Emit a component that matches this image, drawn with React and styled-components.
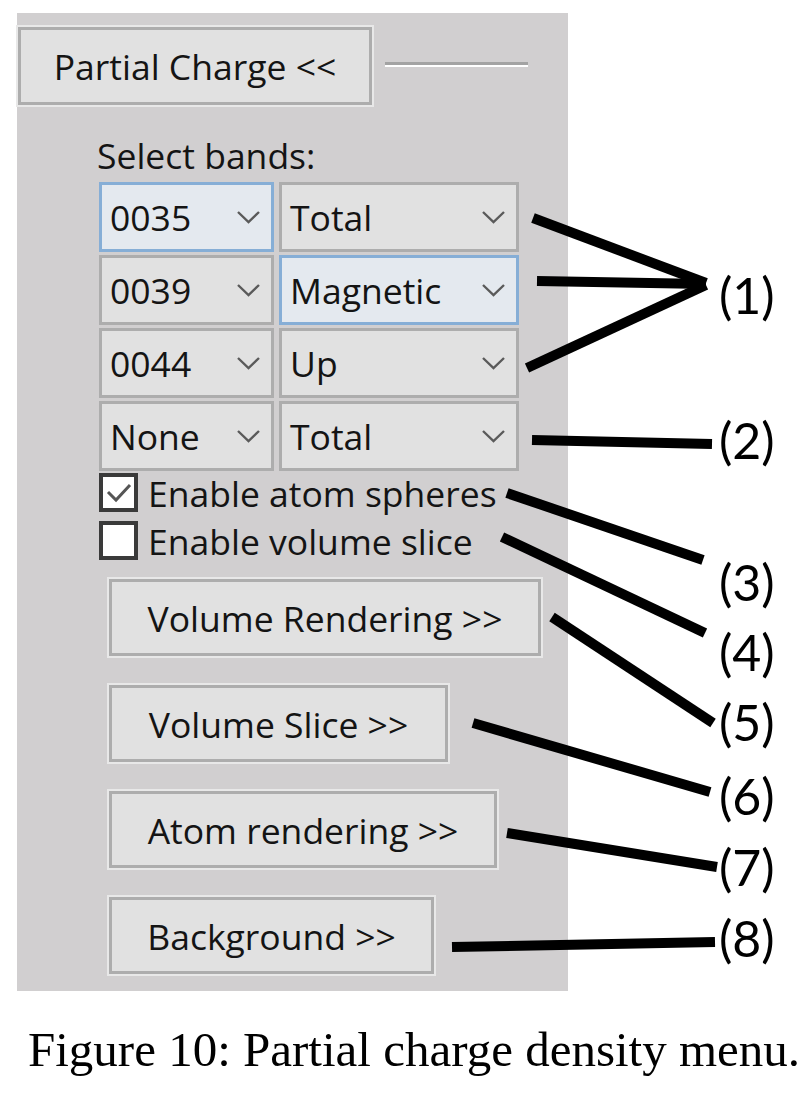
import React from "react";
import styled, { createGlobalStyle } from "styled-components";

const GlobalStyle = createGlobalStyle`
  html, body {
    margin: 0;
    padding: 0;
    background: #ffffff;
  }
  body {
    width: 804px;
    height: 1094px;
    overflow: hidden;
  }
`;

const Page = styled.div`
  width: 804px;
  display: flex;
  flex-direction: column;
`;

const Figure = styled.div`
  position: relative;
  height: 1000px;
  padding: 13px 0 0 17px;
  box-sizing: border-box;
`;

const Panel = styled.div`
  width: 551px;
  height: 978px;
  background: #d1cfd0;
  box-sizing: border-box;
  padding: 14px 0 0 1px;
  display: flex;
  flex-direction: column;
  font-family: "Open Sans", "Noto Sans", sans-serif;
  font-size: 35.5px;
  line-height: 40px;
  color: #141414;
`;

const HeaderRow = styled.div`
  display: flex;
  align-items: center;
  gap: 13px;
`;

const WinButton = styled.button`
  width: ${(p) => p.$width}px;
  height: ${(p) => p.$height || 77}px;
  box-sizing: border-box;
  background: #e1e1e1;
  border: 3px solid #adadad;
  box-shadow: 0 0 0 2px #e8e8e8;
  border-radius: 0;
  padding: 0;
  font: inherit;
  color: inherit;
  text-align: center;
  white-space: nowrap;
  flex: none;
`;

const GroupLine = styled.div`
  width: 143px;
  height: 3px;
  background: #a3a3a3;
  border-bottom: 2px solid #ffffff;
  margin-top: -4px;
`;

const SectionLabel = styled.div`
  margin: 30px 0 0 79px;
`;

const ComboGrid = styled.div`
  margin: 7px 0 0 81px;
  display: grid;
  grid-template-columns: 175px 240px;
  grid-auto-rows: 70px;
  column-gap: 5px;
  row-gap: 3px;
`;

const Combo = styled.div`
  box-sizing: border-box;
  display: flex;
  align-items: center;
  justify-content: space-between;
  padding: 0 10px 0 8px;
  border: 3px solid ${(p) => (p.$focus ? "#86aed6" : "#adadad")};
  background: ${(p) => (p.$focus ? "#e4e9ef" : "#e1e1e1")};
  white-space: nowrap;
`;

const ChevronIcon = styled.svg`
  width: 25px;
  height: 14px;
  flex: none;
`;

const CheckList = styled.div`
  margin: 2px 0 0 81px;
  display: flex;
  flex-direction: column;
  gap: 9px;
`;

const CheckRow = styled.label`
  display: flex;
  align-items: center;
  gap: 10px;
  height: 39px;
  white-space: nowrap;
`;

const CheckBox = styled.span`
  width: 39px;
  height: 39px;
  box-sizing: border-box;
  border: 4px solid #3a3a3a;
  background: #ffffff;
  display: flex;
  align-items: center;
  justify-content: center;
  flex: none;
`;

const ButtonStack = styled.div`
  margin: 19px 0 0 91px;
  display: flex;
  flex-direction: column;
  align-items: flex-start;
  gap: 29px;
`;

const Overlay = styled.svg`
  position: absolute;
  left: 0;
  top: 0;
  width: 804px;
  height: 1000px;
  pointer-events: none;
`;

const Callout = styled.div`
  position: absolute;
  left: ${(p) => p.$x}px;
  top: ${(p) => p.$y - 32}px;
  height: 64px;
  line-height: 64px;
  font-family: Lato, "Open Sans", sans-serif;
  font-size: 50px;
  color: #000;
`;

const Caption = styled.div`
  margin-top: 20px;
  padding-left: 28px;
  font-family: "Liberation Serif", "Times New Roman", serif;
  font-size: 49px;
  line-height: 60px;
  color: #000;
  white-space: nowrap;
`;

const Chevron = () => (
  <ChevronIcon viewBox="0 0 25 14">
    <polyline points="2,2 12.5,12 23,2" fill="none" stroke="#5a5a5a" strokeWidth="2.4" />
  </ChevronIcon>
);

const bands = [
  { band: "0035", kind: "Total", focusBand: true },
  { band: "0039", kind: "Magnetic", focusKind: true },
  { band: "0044", kind: "Up" },
  { band: "None", kind: "Total" },
];

const buttons = [
  { label: "Volume Rendering >>", width: 432 },
  { label: "Volume Slice >>", width: 339 },
  { label: "Atom rendering >>", width: 388 },
  { label: "Background >>", width: 325 },
];

const lines = [
  [533, 218, 706, 283],
  [537, 281, 706, 284],
  [527, 368, 706, 285],
  [532, 440, 712, 444],
  [507, 493, 703, 560],
  [502, 537, 705, 633],
  [552, 617, 713, 723],
  [473, 723, 710, 792],
  [507, 833, 717, 867],
  [452, 947, 715, 942],
];

const callouts = [
  { text: "(1)", y: 295 },
  { text: "(2)", y: 440 },
  { text: "(3)", y: 582 },
  { text: "(4)", y: 652 },
  { text: "(5)", y: 722 },
  { text: "(6)", y: 796 },
  { text: "(7)", y: 867 },
  { text: "(8)", y: 938 },
];

export default function App() {
  return (
    <>
      <GlobalStyle />
      <Page>
        <Figure>
          <Panel>
            <HeaderRow>
              <WinButton $width={354} $height={78}>Partial Charge &lt;&lt;</WinButton>
              <GroupLine />
            </HeaderRow>

            <SectionLabel>Select bands:</SectionLabel>
            <ComboGrid>
              {bands.map((row) => (
                <React.Fragment key={row.band}>
                  <Combo $focus={row.focusBand}>
                    <span>{row.band}</span>
                    <Chevron />
                  </Combo>
                  <Combo $focus={row.focusKind}>
                    <span>{row.kind}</span>
                    <Chevron />
                  </Combo>
                </React.Fragment>
              ))}
            </ComboGrid>

            <CheckList>
              <CheckRow>
                <CheckBox>
                  <svg width="28" height="24" viewBox="0 0 28 24">
                    <polyline points="3,11 11,19 25,4" fill="none" stroke="#555" strokeWidth="3" />
                  </svg>
                </CheckBox>
                Enable atom spheres
              </CheckRow>
              <CheckRow>
                <CheckBox />
                Enable volume slice
              </CheckRow>
            </CheckList>

            <ButtonStack>
              {buttons.map((b) => (
                <WinButton key={b.label} $width={b.width}>
                  {b.label}
                </WinButton>
              ))}
            </ButtonStack>
          </Panel>

          <Overlay viewBox="0 0 804 1000">
            {lines.map(([x1, y1, x2, y2], i) => (
              <line key={i} x1={x1} y1={y1} x2={x2} y2={y2} stroke="#000" strokeWidth="10" />
            ))}
          </Overlay>
          {callouts.map((c) => (
            <Callout key={c.text} $x={719} $y={c.y}>
              {c.text}
            </Callout>
          ))}
        </Figure>
        <Caption>Figure 10: Partial charge density menu.</Caption>
      </Page>
    </>
  );
}
